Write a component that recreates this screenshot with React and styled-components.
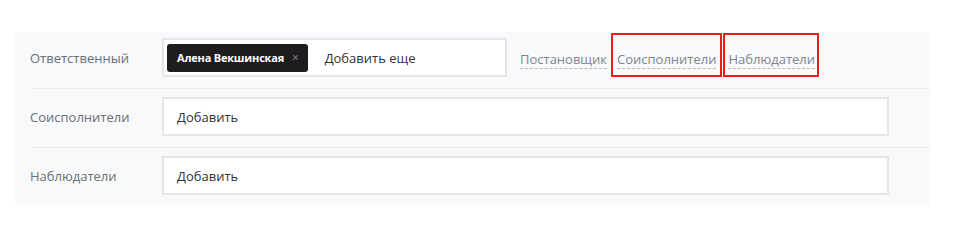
import React from 'react';
import styled, { createGlobalStyle } from 'styled-components';

const GlobalStyle = createGlobalStyle`
  body {
    margin: 0;
    background: #fff;
    font-family: "Open Sans", "Noto Sans", sans-serif;
    font-size: 13px;
  }
`;

const Page = styled.div`
  padding: 32px 31px 21px 15px;
`;

const Panel = styled.div`
  background: #f8f9fb;
  padding: 0 0 0 15px;
`;

const Row = styled.div`
  display: flex;
  align-items: center;
  padding: ${(p) => p.pad};
  padding-right: 41px;
  border-bottom: ${(p) => (p.last ? 'none' : '1px solid #e9ebee')};
`;

const Label = styled.div`
  width: 132px;
  flex-shrink: 0;
  color: #6a6d72;
`;

const Field = styled.div`
  display: flex;
  align-items: center;
  box-sizing: border-box;
  height: 39px;
  width: ${(p) => (p.narrow ? '345px' : 'auto')};
  flex: ${(p) => (p.narrow ? '0 0 auto' : '1')};
  background: #fff;
  border: 2px solid #e3e5e9;
  padding: 0 0 0 3px;
  color: #333;
`;

const Tag = styled.span`
  display: inline-flex;
  align-items: center;
  height: 28px;
  padding: 0 9px 0 10px;
  background: #1f1c1f;
  color: #fff;
  border-radius: 3px;
  font-weight: 700;
  font-size: 11px;
  letter-spacing: -0.2px;
`;

const TagClose = styled.span`
  color: #8b8b8b;
  font-weight: 400;
  font-size: 12px;
  margin-left: 8px;
`;

const Placeholder = styled.span`
  margin-left: ${(p) => (p.after ? '17px' : '10px')};
`;

const Links = styled.div`
  display: flex;
  align-self: flex-start;
  margin: -5px 0 0 11px;
`;

const Marked = styled.span`
  display: inline-flex;
  align-items: flex-start;
  box-sizing: border-box;
  height: 44px;
  border: 2px solid ${(p) => (p.marked ? '#ee1c1c' : 'transparent')};
  padding: 16px ${(p) => p.right || 0}px 0 ${(p) => p.left || 0}px;
  margin-left: ${(p) => p.gap || 0}px;
`;

const RoleLink = styled.a`
  color: #80868d;
  text-decoration: none;
  border-bottom: 1px dashed #b5b9be;
  line-height: 17px;
  white-space: nowrap;
`;

export default function App() {
  return (
    <Page>
      <GlobalStyle />
      <Panel>
        <Row pad="6px 0 11px">
          <Label>Ответственный</Label>
          <Field narrow>
            <Tag>
              Алена Векшинская
              <TagClose>×</TagClose>
            </Tag>
            <Placeholder after>Добавить еще</Placeholder>
          </Field>
          <Links>
            <Marked>
              <RoleLink>Постановщик</RoleLink>
            </Marked>
            <Marked marked gap={2} left={4} right={4}>
              <RoleLink>Соисполнители</RoleLink>
            </Marked>
            <Marked marked gap={1} left={3} right={2}>
              <RoleLink>Наблюдатели</RoleLink>
            </Marked>
          </Links>
        </Row>
        <Row pad="8px 0 11px">
          <Label>Соисполнители</Label>
          <Field>
            <Placeholder>Добавить</Placeholder>
          </Field>
        </Row>
        <Row pad="8px 0 10px" last>
          <Label>Наблюдатели</Label>
          <Field>
            <Placeholder>Добавить</Placeholder>
          </Field>
        </Row>
      </Panel>
    </Page>
  );
}
